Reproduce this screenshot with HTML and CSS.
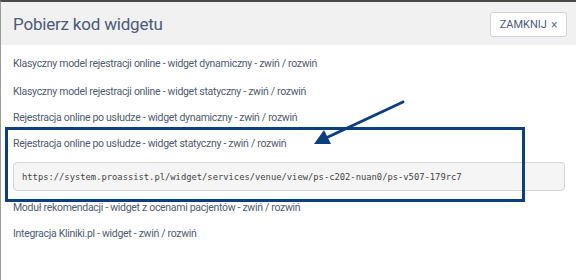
FILE: index.html
```html
<!DOCTYPE html>
<html lang="pl">
<head>
<meta charset="utf-8">
<title>Pobierz kod widgetu</title>
<link rel="stylesheet" href="styles.css">
</head>
<body>
<div class="modal">
  <header class="modal-header">
    <h1 class="modal-title">Pobierz kod widgetu</h1>
    <button class="btn-close" type="button">ZAMKNIJ <span class="x">×</span></button>
  </header>
  <div class="modal-body">
    <a class="item item-first">Klasyczny model rejestracji online - widget dynamiczny - zwiń / rozwiń</a>
    <a class="item">Klasyczny model rejestracji online - widget statyczny - zwiń / rozwiń</a>
    <a class="item">Rejestracja online po usłudze - widget dynamiczny - zwiń / rozwiń</a>
    <a class="item">Rejestracja online po usłudze - widget statyczny - zwiń / rozwiń</a>
    <pre class="code">https://system.proassist.pl/widget/services/venue/view/ps-c202-nuan0/ps-v507-179rc7</pre>
    <a class="item item-after">Moduł rekomendacji - widget z ocenami pacjentów - zwiń / rozwiń</a>
    <a class="item">Integracja Kliniki.pl - widget - zwiń / rozwiń</a>
  </div>
  <div class="highlight"></div>
  <svg class="arrow" width="576" height="280" viewBox="0 0 576 280">
    <line x1="403" y1="102" x2="328" y2="137" stroke="#0d3f7c" stroke-width="3" stroke-linecap="round"/>
    <polygon points="314,144 324,130 331,144" fill="#0d3f7c"/>
  </svg>
</div>
</body>
</html>
```
FILE: styles.css
```css
* { box-sizing: border-box; }
html, body { margin: 0; padding: 0; }
body {
  width: 576px;
  height: 280px;
  overflow: hidden;
  background: #fff;
  font-family: Roboto, "Liberation Sans", sans-serif;
}
.modal {
  position: relative;
  height: 280px;
  border-top: 2px solid #4a4a4a;
  border-left: 1px solid #9a9a9a;
}
.modal-header {
  height: 43px;
  background: #f1f1f1;
  display: flex;
  align-items: center;
  justify-content: space-between;
  padding: 0 9px 0 12px;
}
.modal-title {
  margin: 0;
  font-size: 17px;
  font-weight: 400;
  color: #4b5b78;
  letter-spacing: -0.2px;
}
.btn-close {
  height: 25px;
  width: 77px;
  margin-top: 2px;
  background: #fff;
  border: 1px solid #cfd3da;
  border-radius: 3px;
  font-family: Roboto, "Liberation Sans", sans-serif;
  font-size: 11px;
  color: #4b5b78;
  padding: 0;
  display: flex;
  align-items: center;
  justify-content: center;
  gap: 4px;
}
.btn-close .x { font-size: 12px; color: #6a7590; }
.modal-body {
  padding: 10px 11px 0 12px;
  display: flex;
  flex-direction: column;
}
.item {
  display: block;
  font-size: 10.5px;
  letter-spacing: -0.3px;
  line-height: 18px;
  color: #4f5c70;
  margin-bottom: 8px;
}
.item-first { margin-bottom: 10px; }
.code {
  margin: 1px 0 0 0;
  height: 29px;
  padding: 0 8px;
  display: flex;
  align-items: center;
  background: #f5f5f5;
  border: 1px solid #d4d4d4;
  border-radius: 4px;
  font-family: "DejaVu Sans Mono", "Liberation Mono", monospace;
  font-size: 8.8px;
  color: #444;
}
.item-after { margin-top: 8px; }
.highlight {
  position: absolute;
  left: 4px;
  top: 125px;
  width: 520px;
  height: 75px;
  border: 3px solid #0d3f7c;
}
.arrow {
  position: absolute;
  left: -1px;
  top: -2px;
  pointer-events: none;
}
```
